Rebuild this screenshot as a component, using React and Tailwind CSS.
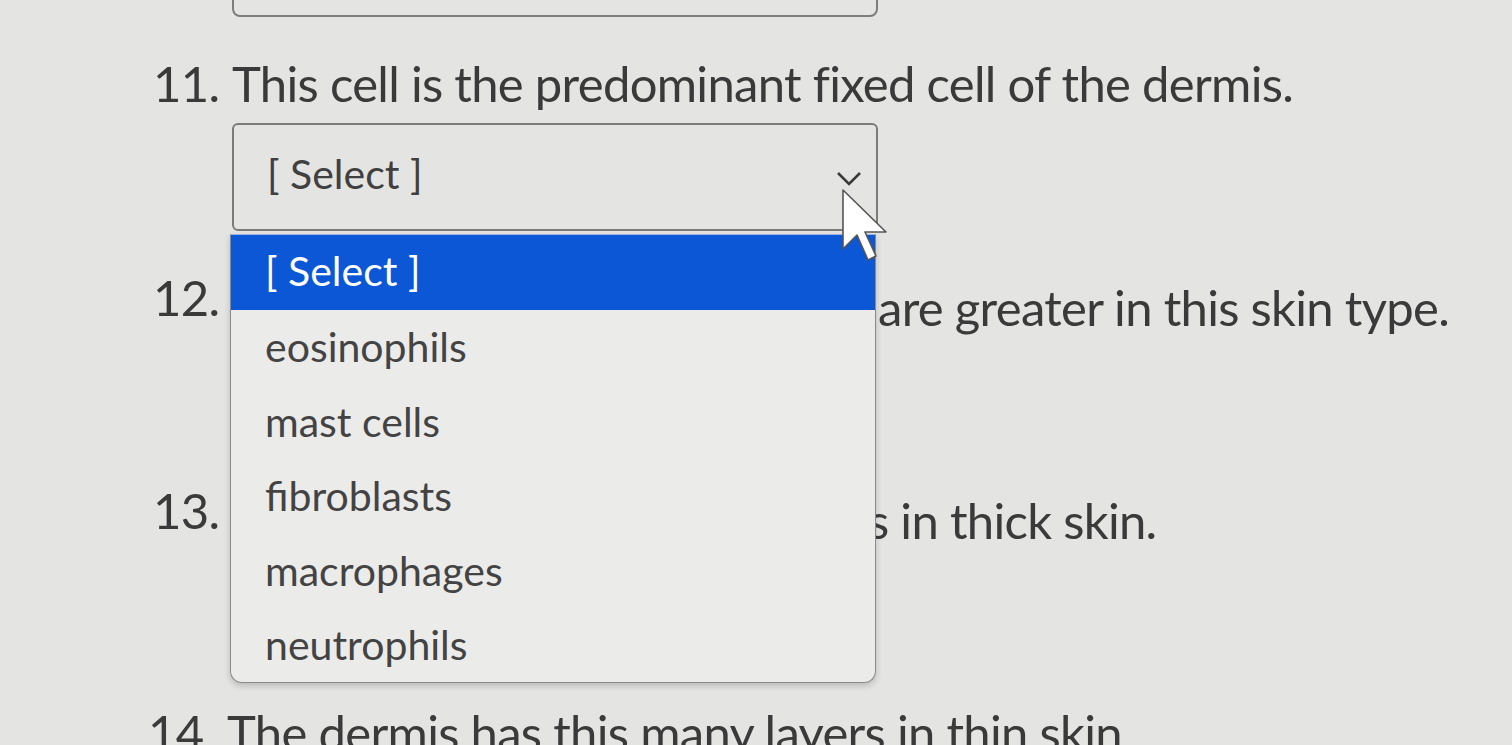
import React from 'react';

const options = ['[ Select ]', 'eosinophils', 'mast cells', 'fibroblasts', 'macrophages', 'neutrophils'];

const Chevron = () => (
  <svg className="absolute right-[14px] top-[44px]" width="26" height="18" viewBox="0 0 26 18" fill="none">
    <polyline points="2,4 13,15 24,4" stroke="#3a3a3a" strokeWidth="2.6" />
  </svg>
);

const Cursor = () => (
  <svg className="absolute left-[841px] top-[188px]" width="50" height="78" viewBox="0 0 50 78">
    <polygon
      points="2,2 2,61 16,47 27,72 35,68 24,44 45,44"
      fill="#ffffff"
      stroke="#555555"
      strokeWidth="1.6"
      strokeLinejoin="round"
    />
  </svg>
);

const Dropdown = () => (
  <div className="absolute left-[230px] top-[234px] w-[646px] overflow-hidden rounded-b-[12px] border-[1.5px] border-t-[#9db4e0] border-x-[#8a8a8a] border-b-[#8a8a8a] bg-[#ebebe9] shadow-[0_3px_6px_rgba(0,0,0,0.18)]">
    {options.map((opt, i) => (
      <div
        key={opt}
        className={`flex h-[74.5px] items-center pl-[34px] text-[41px] ${
          i === 0 ? 'bg-[#0c57d6] pb-[4px] text-white' : 'text-[#434343]'
        }`}
      >
        {opt}
      </div>
    ))}
  </div>
);

export default function App() {
  return (
    <div className="relative h-[745px] w-full overflow-hidden bg-[#e4e4e2] font-['Lato',sans-serif] text-[#3a3a3a]">
      <div className="pl-[153px]">
        {/* previous question's select, mostly scrolled off */}
        <div className="ml-[79px] -mt-[90px] h-[107px] w-[646px] rounded-lg border-2 border-[#7d7d7d]" />

        <div className="mt-[34px] flex text-[49px] leading-[65px] tracking-[-0.7px]">
          <span className="w-[79px] shrink-0">11.</span>
          <span>This cell is the predominant fixed cell of the dermis.</span>
        </div>

        <div className="relative ml-[79px] mt-[7px] flex h-[108px] w-[646px] items-center rounded-md border-2 border-[#7b7b7b] pl-[33px] pb-[6px] text-[41px] text-[#404040]">
          [ Select ]
          <Chevron />
        </div>

        <div className="mt-[34px] flex items-start text-[49px] leading-[65px] tracking-[-0.7px]">
          <span className="w-[79px] shrink-0">12.</span>
          <span className="w-[646px] shrink-0" />
          <span className="mt-[10px] whitespace-nowrap">are greater in this skin type.</span>
        </div>

        <div className="mt-[138px] flex items-start text-[49px] leading-[65px] tracking-[-0.7px]">
          <span className="w-[79px] shrink-0">13.</span>
          <span className="w-[636px] shrink-0" />
          <span className="mt-[10px] whitespace-nowrap">s in thick skin.</span>
        </div>

        <div className="-ml-[5px] mt-[147px] flex text-[49px] leading-[65px] tracking-[-0.7px]">
          <span className="w-[79px] shrink-0">14.</span>
          <span className="whitespace-nowrap">The dermis has this many layers in thin skin.</span>
        </div>
      </div>

      <Dropdown />
      <Cursor />
    </div>
  );
}
